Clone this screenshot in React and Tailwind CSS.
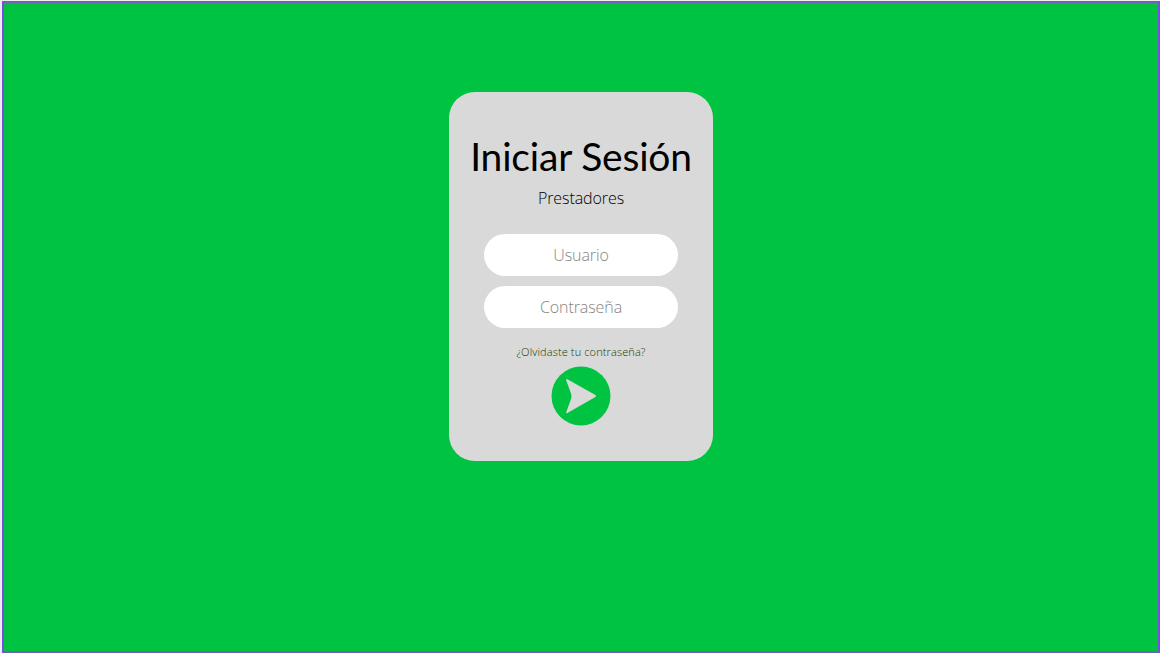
export default function App() {
  return (
    <div className="h-[653px] w-[1160px] overflow-hidden bg-[#eeeeee] pt-px pl-[2px]">
      <main className="flex h-[652px] w-full items-start justify-center border-2 border-x-[#7b4be8] border-y-[#6f62b8] bg-[#00c441] pt-[89px]">
        <form
          className="flex h-[368.5px] w-[264px] flex-col items-center rounded-[26px] bg-[#d9d9d9] pt-[40px] font-['Open_Sans',sans-serif] font-light"
          onSubmit={(e) => e.preventDefault()}
        >
          <h1 className="font-['Lato',sans-serif] text-[39px] leading-[48px] font-normal tracking-[-0.18px] whitespace-nowrap text-black">
            Iniciar Sesión
          </h1>
          <p className="mt-[7px] text-[16px] leading-[22px] tracking-[-0.08px] text-black">Prestadores</p>
          <input
            type="text"
            placeholder="Usuario"
            className="mt-[25px] h-[42px] w-[194px] rounded-[21px] bg-white text-center text-[16px] tracking-[-0.08px] placeholder:text-[#858585]"
          />
          <input
            type="password"
            placeholder="Contraseña"
            className="mt-[10px] h-[42px] w-[194px] rounded-[21px] bg-white text-center text-[16px] tracking-[-0.08px] placeholder:text-[#858585]"
          />
          <a href="#" className="mt-[16px] text-[11px] leading-[16px] font-light tracking-[0.12px] text-[#123c00]">
            ¿Olvidaste tu contraseña?
          </a>
          <button type="submit" aria-label="Entrar" className="mt-[6px] size-[60px] shrink-0 rounded-full">
            <svg viewBox="0 0 60 60" className="size-[60px]" fill="#d9d9d9">
              <circle cx="30" cy="30" r="29.5" fill="#00c441" />
              <path d="M16.4 13.2 44.4 28.9Q46 30 44.4 31.1L16.4 47.1Q14.8 47.8 15.2 46.2L20.2 32.5Q20.8 30.2 20.2 28L15.2 14.2Q14.8 12.4 16.4 13.2Z" />
            </svg>
          </button>
        </form>
      </main>
    </div>
  );
}
